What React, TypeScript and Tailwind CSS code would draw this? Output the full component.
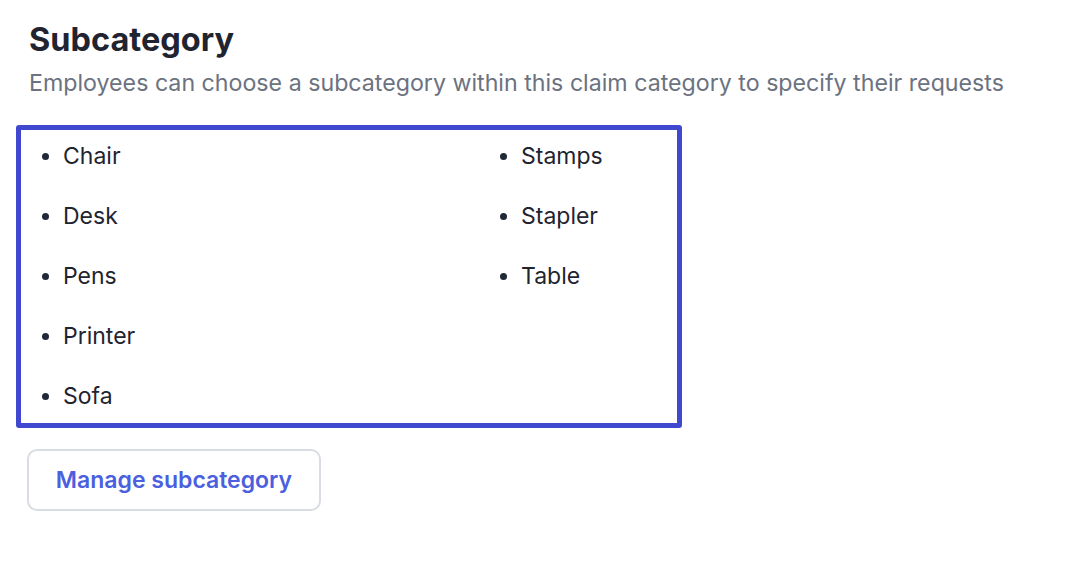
import React from "react";

const leftItems = ["Chair", "Desk", "Pens", "Printer", "Sofa"];
const rightItems = ["Stamps", "Stapler", "Table"];

function Item({ label }: { label: string }) {
  return (
    <li className="flex h-[60px] items-center">
      <span className="mr-[14px] h-[7px] w-[7px] rounded-full bg-[#1f2937]" />
      <span>{label}</span>
    </li>
  );
}

export default function App() {
  return (
    <div className="min-h-screen bg-white pl-[29px] pt-[20px] font-['Inter',sans-serif]">
      <h1 className="text-[32.5px] font-bold leading-[40px] text-[#1f2430]">Subcategory</h1>
      <p className="mt-[9px] text-[23.2px] leading-[28px] text-[#6b7280]">
        Employees can choose a subcategory within this claim category to specify their requests
      </p>

      <div className="-ml-[13px] mt-[28px] flex h-[303px] w-[666px] rounded-[3px] border-[5px] border-[#4048cf] pl-[21px] text-[23px] text-[#1f2430]">
        <ul className="w-[458px] -mt-[4px]">
          {leftItems.map((i) => (
            <Item key={i} label={i} />
          ))}
        </ul>
        <ul className="-mt-[4px]">
          {rightItems.map((i) => (
            <Item key={i} label={i} />
          ))}
        </ul>
      </div>

      <button className="-ml-[2px] mt-[21px] h-[62px] w-[294px] rounded-[10px] border-2 border-[#d9dce3] bg-white text-[23px] font-semibold text-[#4b5fdf]">
        Manage subcategory
      </button>
    </div>
  );
}
